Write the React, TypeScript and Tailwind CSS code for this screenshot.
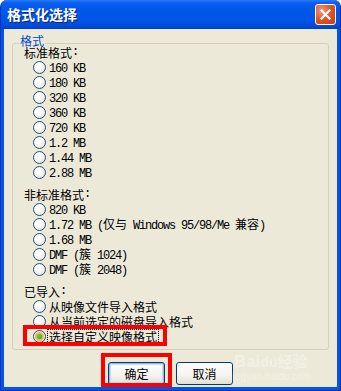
import React from "react";

const standard = ["160 KB", "180 KB", "320 KB", "360 KB", "720 KB", "1.2 MB", "1.44 MB", "2.88 MB"];
const nonStandard = ["820 KB", "1.72 MB (仅与 Windows 95/98/Me 兼容)", "1.68 MB", "DMF (簇 1024)", "DMF (簇 2048)"];
const imported = ["从映像文件导入格式", "从当前选定的磁盘导入格式"];

// SimSun-like: ascii runs half width, CJK full width
function Mixed({ text }: { text: string }) {
  const parts = text.split(/([\x00-\x7F]+)/).filter(Boolean);
  return (
    <>
      {parts.map((p, i) =>
        /^[\x00-\x7F]+$/.test(p) ? (
          <span key={i} className="font-['Liberation_Mono',monospace] text-[12px] leading-[13px] tracking-[-1.2px] whitespace-pre">
            {p}
          </span>
        ) : (
          <span key={i} className="font-['Noto_Sans_CJK_SC',sans-serif] text-[12px] leading-[13px]">
            {p}
          </span>
        ),
      )}
    </>
  );
}

function Radio({ checked = false }: { checked?: boolean }) {
  return (
    <span className="relative flex h-[13px] w-[13px] shrink-0 items-center justify-center rounded-full border border-[#1c5180] bg-[radial-gradient(circle_at_35%_35%,#ffffff_25%,#dcd9cf_100%)]">
      {checked && (
        <span className="flex h-[9px] w-[9px] items-center justify-center rounded-full bg-[#f6b544]">
          <span className="h-[5px] w-[5px] rounded-full bg-[radial-gradient(circle_at_40%_40%,#5fd35f,#21a121)]" />
        </span>
      )}
    </span>
  );
}

function Row({ text }: { text: string }) {
  return (
    <div className="flex h-[15px] items-center gap-[3px] pl-[9px]">
      <Radio />
      <span className="leading-[13px] text-black">
        <Mixed text={text} />
      </span>
    </div>
  );
}

function Label({ text }: { text: string }) {
  return (
    <div className="flex h-[15px] items-center leading-[13px] text-black">
      <Mixed text={text} />
    </div>
  );
}

function XpButton({ children, primary = false }: { children: React.ReactNode; primary?: boolean }) {
  return (
    <button
      className={
        "flex h-[23px] w-[57px] items-center justify-center rounded-[3px] border border-[#003c74] bg-[linear-gradient(to_bottom,#ffffff_0%,#f4f3ee_60%,#e3e0d5_100%)] font-['Noto_Sans_CJK_SC',sans-serif] text-[12px] text-black " +
        (primary ? "shadow-[inset_0_0_0_1px_#9ab6ef,inset_0_0_0_2px_#c8dbfb]" : "")
      }
    >
      {children}
    </button>
  );
}

export default function App() {
  return (
    <div className="h-[391px] w-[341px] bg-white">
      <div className="flex h-full w-full flex-col overflow-hidden rounded-t-[7px] border-x border-b border-[#0831c0] bg-[#0454e4]">
        {/* title bar */}
        <div className="flex h-[29px] shrink-0 items-center justify-between bg-[linear-gradient(to_bottom,#2a7cf6_0%,#0a5ff0_10%,#0058e8_30%,#0055e5_70%,#004ad8_90%,#0040c4_100%)] pl-[6px] pr-[4px]">
          <span className="font-['Noto_Sans_CJK_SC',sans-serif] text-[14px] font-bold text-white [text-shadow:1px_1px_0_#0a1e6e]">
            格式化选择
          </span>
          <span className="flex h-[21px] w-[21px] items-center justify-center rounded-[3px] border border-white bg-[radial-gradient(circle_at_30%_30%,#f29b7c_0%,#e2562c_45%,#c6391a_100%)]">
            <svg width="11" height="11" viewBox="0 0 11 11">
              <path d="M1.5 1.5 L9.5 9.5 M9.5 1.5 L1.5 9.5" stroke="white" strokeWidth="2.2" strokeLinecap="square" />
            </svg>
          </span>
        </div>

        {/* body */}
        <div className="relative mx-[3px] mb-[3px] flex flex-1 flex-col bg-[#ece9d8]">
          <div className="relative mx-[8px] mt-[14px] rounded-[3px] border border-[#d0d0bf] pb-[5px] pl-[11px] pt-[1px]">
            <span className="absolute left-[6px] top-[-9px] bg-[#ece9d8] px-[1px] font-['Noto_Sans_CJK_SC',sans-serif] text-[12px] leading-[12px] text-[#0046d5]">
              格式
            </span>

            <Label text="标准格式:" />
            {standard.map((t) => (
              <Row key={t} text={t} />
            ))}

            <div className="mt-[7px]">
              <Label text="非标准格式:" />
              {nonStandard.map((t) => (
                <Row key={t} text={t} />
              ))}
            </div>

            <div className="mt-[7px]">
              <Label text="已导入:" />
              {imported.map((t) => (
                <Row key={t} text={t} />
              ))}
              <div className="relative flex h-[15px] items-center gap-[2px] pl-[9px]">
                <Radio checked />
                <span className="px-[1px] leading-[13px] text-black outline-1 outline-dotted outline-black">
                  <Mixed text="选择自定义映像格式" />
                </span>
                <span className="absolute left-[-1px] top-[-4px] h-[21px] w-[144px] border-[4px] border-[#ff0000]" />
              </div>
            </div>
          </div>

          <div className="mt-[12px] flex justify-center gap-[11px]">
            <span className="relative">
              <XpButton primary>确定</XpButton>
              <span className="absolute left-[-7px] top-[-9px] h-[34px] w-[71px] border-[4px] border-[#ff0000]" />
            </span>
            <XpButton>取消</XpButton>
          </div>

          {/* watermark */}
          <div className="pointer-events-none absolute bottom-[4px] right-[26px] flex flex-col items-center text-white/35">
            <span className="font-['Liberation_Sans',sans-serif] text-[17px] font-bold leading-[18px]">
              Bai<span className="text-[14px]">du</span>
              <span className="font-['Noto_Sans_CJK_SC',sans-serif] text-[15px]">经验</span>
            </span>
            <span className="font-['Liberation_Sans',sans-serif] text-[10px] leading-[12px]">jingyan.baidu.com</span>
          </div>
        </div>
      </div>
    </div>
  );
}
